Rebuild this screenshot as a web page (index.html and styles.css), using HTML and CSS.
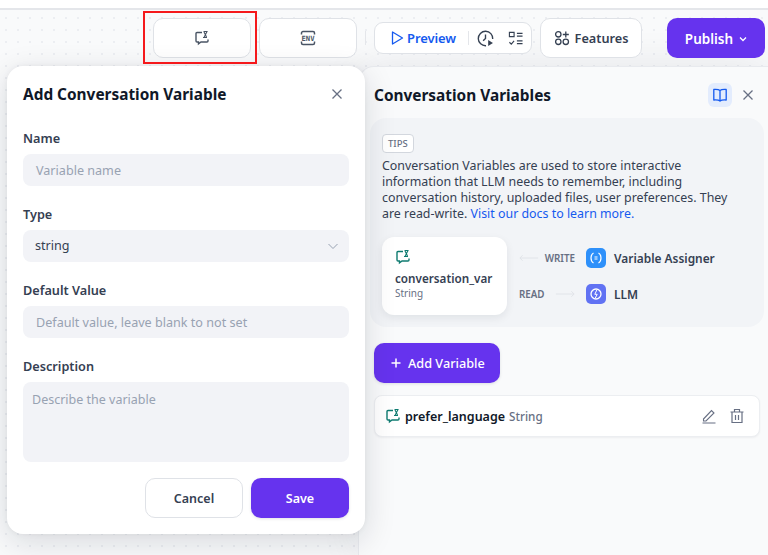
FILE: index.html
```html
<!DOCTYPE html>
<html lang="en">
<head>
<meta charset="utf-8">
<title>Conversation Variables</title>
<link rel="stylesheet" href="styles.css">
</head>
<body>
<div class="topline"></div>
<div class="app">
  <header class="toolbar">
    <button class="tool"><svg class="ic" viewBox="0 0 16 16"><use href="#conv"/></svg></button>
    <button class="tool"><svg class="ic" viewBox="0 0 16 16"><path d="M1.500 4.500V3A1.500 1.500 0 0 1 3 1.500h10A1.500 1.500 0 0 1 14.500 3V4.500M1.500 11.500V13A1.500 1.500 0 0 0 3 14.500h10a1.500 1.500 0 0 0 1.500-1.500V11.500" fill="none" stroke="#495464" stroke-width="1.500"/><text x="8" y="10.500" class="envtext">ENV</text></svg></button>
    <span class="vsep"></span>
    <div class="group">
      <span class="preview"><svg class="ic" viewBox="0 0 16 16"><path d="M3.500 2v12L13.500 8z" fill="none" stroke="#155aef" stroke-width="1.300" stroke-linejoin="round"/></svg>Preview</span>
      <span class="gsep"></span>
      <svg class="ic16" viewBox="0 0 16 16"><path d="M8.500 14.800A6.800 6.800 0 1 1 14.800 8.500M8 4.200V8L5.800 10.200" fill="none" stroke="#354052" stroke-width="1.300"/><path d="M10.500 9.500v5.500l4.500-2.700z" fill="#354052"/></svg>
      <svg class="ic15" viewBox="0 0 16 16"><path d="M1.500 1.500h5v4.500h-5zM9.500 2.500h6M9.500 5.500h6M9.500 10.500h6M9.500 13.500h6M1.500 12l2 2L6.500 10.500" fill="none" stroke="#354052" stroke-width="1.200"/></svg>
    </div>
    <button class="features"><svg class="ic" viewBox="0 0 16 16"><g fill="none" stroke="#354052" stroke-width="1.300"><circle cx="4.300" cy="4.300" r="2.700"/><circle cx="4.300" cy="11.800" r="2.700"/><circle cx="11.800" cy="11.800" r="2.700"/><path d="M11.800 1.500v6M8.800 4.500h6"/></g></svg>Features</button>
    <button class="publish">Publish<svg class="chev" viewBox="0 0 12 12"><path d="M3 4.500 6 7.500 9 4.500" fill="none" stroke="#fff" stroke-width="1.300"/></svg></button>
  </header>

  <main class="workspace">
    <section class="modal">
      <div class="modal-head"><h2>Add Conversation Variable</h2><svg class="close" viewBox="0 0 16 16"><path d="M3.500 3.500l9 9M12.500 3.500l-9 9" stroke="#676f83" stroke-width="1.300"/></svg></div>
      <label class="flabel">Name</label>
      <div class="input ph">Variable name</div>
      <label class="flabel">Type</label>
      <div class="input select"><span>string</span><svg class="chev" viewBox="0 0 12 12"><path d="M1.500 4 6 8.500 10.500 4" fill="none" stroke="#98a2b2" stroke-width="1"/></svg></div>
      <label class="flabel">Default Value</label>
      <div class="input ph">Default value, leave blank to not set</div>
      <label class="flabel">Description</label>
      <div class="area ph">Describe the variable</div>
      <div class="actions"><button class="cancel">Cancel</button><button class="save">Save</button></div>
    </section>

    <aside class="panel">
      <div class="panel-head">
        <h2>Conversation Variables</h2>
        <span class="bookbtn"><svg class="ic" viewBox="0 0 16 16"><path d="M8 3.500C6.800 2.500 4.500 2.300 1.800 2.500v10.500C4.500 12.800 6.800 13 8 14c1.200-1 3.500-1.200 6.200-1V2.500C11.500 2.300 9.200 2.500 8 3.500zM8 3.500V14" fill="none" stroke="#155aef" stroke-width="1.300" stroke-linejoin="round"/></svg></span>
        <svg class="close" viewBox="0 0 16 16"><path d="M3.500 3.500l9 9M12.500 3.500l-9 9" stroke="#676f83" stroke-width="1.300"/></svg>
      </div>
      <div class="tips">
        <span class="badge">TIPS</span>
        <p>Conversation Variables are used to store interactive information that LLM needs to remember, including conversation history, uploaded files, user preferences. They are read-write. <a>Visit our docs to learn more.</a></p>
        <div class="diagram">
          <div class="varcard">
            <svg class="ic" viewBox="0 0 16 16"><use href="#conv-g"/></svg>
            <div class="vname">conversation_var</div>
            <div class="vtype">String</div>
          </div>
          <div class="flows">
            <div class="flow">
              <span class="flowleft">
                <svg class="arrow" viewBox="0 0 22 8"><path d="M21 4H1M4 1 1 4l3 3" fill="none" stroke="#dfe2e7"/></svg>
                <span class="flowlabel">WRITE</span>
              </span>
              <span class="node blue"><svg viewBox="0 0 14 14"><path d="M4.500 2C2.700 3 2 5 2 7s.7 4 2.500 5M9.500 2C11.300 3 12 5 12 7s-.7 4-2.500 5M5.500 6h3M5.500 8h3" fill="none" stroke="#fff" stroke-width="1.200"/></svg></span>
              <span class="nodename">Variable Assigner</span>
            </div>
            <div class="flow">
              <span class="flowleft">
                <span class="flowlabel">READ</span>
                <svg class="arrow" viewBox="0 0 22 8"><path d="M1 4h20M18 1l3 3-3 3" fill="none" stroke="#dfe2e7"/></svg>
              </span>
              <span class="node indigo"><svg viewBox="0 0 14 14"><circle cx="7" cy="7" r="5" fill="none" stroke="#fff" stroke-width="1.300"/><path d="M7.800 3 5.800 7.300h2.400L6.300 11" fill="none" stroke="#fff" stroke-width="1"/></svg></span>
              <span class="nodename">LLM</span>
            </div>
          </div>
        </div>
      </div>
      <button class="addvar"><svg class="ic" viewBox="0 0 16 16"><path d="M8 3.500v9M3.500 8h9" stroke="#fff" stroke-width="1.500"/></svg>Add Variable</button>
      <div class="varrow">
        <svg class="ic" viewBox="0 0 16 16"><use href="#conv-g"/></svg>
        <span class="rname">prefer_language</span>
        <span class="rtype">String</span>
        <span class="rowacts">
          <svg class="ic" viewBox="0 0 16 16"><path d="M2.500 11 10.500 2.500l2.500 2.500L5 13H2.500zM1.500 15h13" fill="none" stroke="#676f83" stroke-width="1.100"/></svg>
          <svg class="ic" viewBox="0 0 16 16"><path d="M1.500 4h13M5.500 4V1.500h5V4M3 4v10.500h10V4M6.500 7v5M9.500 7v5" fill="none" stroke="#676f83" stroke-width="1.200"/></svg>
        </span>
      </div>
    </aside>
  </main>
</div>
<div class="highlight"></div>
<svg class="defs" aria-hidden="true">
  <defs>
    <g id="conv"><path d="M8 2.500H3a1 1 0 0 0-1 1V11a1 1 0 0 0 1 1h1.500v1.800L7 12h6a1 1 0 0 0 1-1V9.500" fill="none" stroke="#495464" stroke-width="1.400"/><path d="M9.500 1.500h4M9 7.500h4" fill="none" stroke="#495464" stroke-width="1.100"/><path d="M10 7.500 13 1.500M10 2 12.500 7" stroke="#495464" stroke-width="1.100"/></g>
    <g id="conv-g"><path d="M8 2.500H3a1 1 0 0 0-1 1V11a1 1 0 0 0 1 1h1.500v1.800L7 12h6a1 1 0 0 0 1-1V9.500" fill="none" stroke="#0e7b70" stroke-width="1.400"/><path d="M9.500 1.500h4M9 7.500h4" fill="none" stroke="#0e7b70" stroke-width="1.100"/><path d="M10 7.500 13 1.500M10 2 12.500 7" stroke="#0e7b70" stroke-width="1.100"/></g>
  </defs>
</svg>
</body>
</html>
```

FILE: styles.css
```css
* { box-sizing: border-box; }
html, body { margin: 0; height: 100%; overflow: hidden; }
body {
  font-family: "Noto Sans", "Open Sans", sans-serif;
  color: #354052;
  background-color: #f9fafb;
  background-image: radial-gradient(circle, #eceef2 1px, transparent 1px);
  background-size: 12px 12px;
  position: relative;
}
h2, p { margin: 0; }
button { font-family: inherit; cursor: pointer; }
.defs { position: absolute; width: 0; height: 0; }

.topline { height: 10px; background: #fff; border-bottom: 2px solid #e4e6ea; position: relative; z-index: 3; }
.toolbar { height: 56px; display: flex; align-items: center; padding: 0 3px 0 153px; position: relative; z-index: 1; }
.ic { width: 16px; height: 16px; flex: none; display: block; }
.ic16 { width: 17px; height: 17px; flex: none; display: block; }
.ic15 { width: 15px; height: 15px; flex: none; display: block; margin-left: 14px; }
.envtext { font: 700 7.200px "DejaVu Sans Mono", monospace; fill: #495464; text-anchor: middle; }

.tool {
  width: 98px; height: 40px; margin-right: 8px; padding: 0;
  display: flex; align-items: center; justify-content: center;
  background: #fff; border: 1px solid #dfe2e7; border-radius: 10px;
}
.vsep { width: 1px; height: 14px; background: #e4e6ea; margin-right: 8px; }
.group {
  width: 158px; height: 32px; display: flex; align-items: center;
  background: #fff; border: 1px solid #dfe2e7; border-radius: 9px; padding-left: 14px;
}
.preview { display: flex; align-items: center; gap: 2px; color: #155aef; font-size: 13px; font-weight: 600; letter-spacing: -.1px; width: 79px; }
.gsep { width: 1px; height: 14px; background: #e4e6ea; margin-right: 8px; }
.features {
  width: 102px; height: 40px; margin-left: 8px; padding: 0;
  display: flex; align-items: center; justify-content: center; gap: 5px;
  background: #fff; border: 1px solid #dfe2e7; border-radius: 10px;
  color: #354052; font-size: 12.700px; font-weight: 600;
}
.publish {
  width: 98px; height: 40px; margin-left: 25px; padding: 1px 0 0 2px; border: 0;
  display: flex; align-items: center; justify-content: center; gap: 4px;
  background: #6633ee; border-radius: 10px; color: #fff; font-size: 13.500px; font-weight: 600;
}
.chev { width: 12px; height: 12px; flex: none; }

.workspace { display: flex; justify-content: flex-end; height: 489px; position: relative; }

.modal {
  position: absolute; left: 7px; top: 0; width: 358px; height: 468px; z-index: 2;
  background: #fff; border-radius: 16px; padding: 16px;
  box-shadow: 0 8px 32px rgba(16, 24, 40, .14), 0 0 6px rgba(16, 24, 40, .05);
}
.modal-head { display: flex; align-items: center; justify-content: space-between; height: 24px; margin-bottom: 24px; padding-right: 4px; }
.modal-head h2, .panel-head h2 { font-size: 15.400px; line-height: 24px; font-weight: 700; color: #101828; margin-top: 2px; }
.close { width: 16px; height: 16px; flex: none; }
.flabel { display: block; font-size: 12.700px; line-height: 16px; font-weight: 600; color: #354052; margin-bottom: 8px; }
.input {
  height: 32px; border-radius: 8px; background: #f2f3f7; font-size: 12.600px; line-height: 34px;
  padding: 0 13px; margin-bottom: 20px;
}
.ph { color: #98a2b2; }
.select { display: flex; align-items: center; justify-content: space-between; color: #354052; padding: 0 10px 0 12px; }
.area { height: 80px; border-radius: 8px; background: #f2f3f7; font-size: 12.500px; line-height: 18px; padding: 9px 9px; }
.actions { display: flex; justify-content: flex-end; gap: 8px; margin-top: 16px; }
.cancel, .save { width: 98px; height: 40px; border-radius: 10px; font-size: 12.500px; font-weight: 600; padding: 0; }
.cancel { background: #fff; border: 1px solid #dfe2e7; color: #354052; }
.save { background: #6633ee; border: 0; color: #fff; box-shadow: 0 1px 3px rgba(52, 64, 84, .15); }

.panel {
  width: 410px; height: 100%; padding: 16px 8px 0 15px; background: #f9fafb;
  border-left: 1px solid #e8eaee; border-top: 1px solid #e8eaee; border-top-left-radius: 16px;
  box-shadow: 0 0 40px rgba(16, 24, 40, .09);
}
.panel-head { display: flex; align-items: center; height: 24px; margin-bottom: 11px; margin-right: 4px; }
.panel-head h2 { flex: 1; }
.bookbtn { width: 24px; height: 24px; border-radius: 6px; background: #e3ecfd; display: flex; align-items: center; justify-content: center; margin-right: 8px; }
.tips { margin-left: -4px; width: 394px; height: 209px; background: #f2f4f7; border-radius: 16px; padding: 16px 12px 12px; }
.badge {
  display: block; width: fit-content; height: 19px; padding: 0 5px; line-height: 17px; font-size: 9.500px; font-weight: 500;
  color: #676f83; background: #fff; border: 1px solid #d3d7de; border-radius: 4px;
}
.tips p { font-size: 12.400px; line-height: 16px; color: #354052; margin-top: 5px; max-width: 362px; }
.tips a { color: #155aef; }
.diagram { display: flex; margin-top: 15px; }
.varcard {
  width: 125px; height: 78px; background: #fff; border-radius: 12px; padding: 12px 0 0 13px; overflow: hidden;
  box-shadow: 0 3px 8px rgba(16, 24, 40, .08);
}
.vname { font-size: 11.700px; line-height: 16px; font-weight: 600; margin-top: 5px; white-space: nowrap; color: #354052; }
.vtype { font-size: 10px; line-height: 14px; color: #676f83; }
.flows { display: flex; flex-direction: column; margin-left: 12px; padding-top: 11px; gap: 16px; }
.flow { display: flex; align-items: center; height: 20px; }
.flowleft { display: flex; align-items: center; justify-content: space-between; width: 56px; margin-right: 11px; }
.arrow { width: 20px; height: 8px; flex: none; }
.flowlabel { font-size: 9.800px; font-weight: 600; color: #676f83; white-space: nowrap; }
.node { width: 20px; height: 20px; border-radius: 5px; display: flex; align-items: center; justify-content: center; margin-right: 8px; }
.node svg { width: 14px; height: 14px; }
.blue { background: #2e90fa; }
.indigo { background: #6172f3; }
.nodename { font-size: 11.900px; font-weight: 600; color: #354052; }

.addvar {
  display: flex; align-items: center; gap: 4px; width: 126px; height: 40px; margin-top: 16px; padding: 0 0 0 14px;
  background: #6633ee; border: 0; border-radius: 10px; color: #fff; font-size: 12.700px; font-weight: 500;
  box-shadow: 0 1px 3px rgba(52, 64, 84, .15);
}
.varrow {
  display: flex; align-items: center; width: 386px; height: 42px; margin-top: 12px; padding: 0 14px 0 10px; gap: 3px;
  background: #fff; border: 1px solid #eceef1; border-radius: 8px; box-shadow: 0 1px 2px rgba(16, 24, 40, .05);
}
.rname { font-size: 12.500px; font-weight: 600; color: #101828; margin-left: 1px; }
.rtype { font-size: 11.700px; font-weight: 500; color: #676f83; margin-left: 1px; }
.rowacts { margin-left: auto; display: flex; gap: 12px; }

.highlight { position: absolute; left: 143px; top: 11px; width: 114px; height: 53px; border: 2px solid #f5191c; z-index: 4; }
```
